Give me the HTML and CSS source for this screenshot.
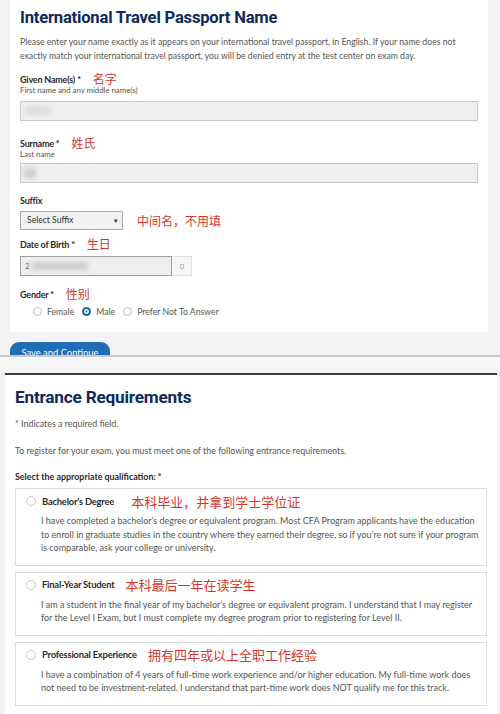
FILE: index.html
```html
<!DOCTYPE html>
<html lang="en">

<head>
    <meta charset="UTF-8">
    <meta name="viewport" content="width=device-width, initial-scale=1.0">
    <title>Registration</title>
    <link rel="stylesheet" href="styles.css">
</head>

<body>
    <div class="top">
        <div class="card">
            <h1 class="title">International Travel Passport Name</h1>
            <p class="intro">Please enter your name exactly as it appears on your international travel passport, in English. If your name does not exactly match your international travel passport, you will be denied entry at the test center on exam day.</p>

            <div class="label label_first">Given Name(s) *<span class="note note_given">名字</span></div>
            <div class="hint">First name and any middle name(s)</div>
            <div class="input input_given"><span class="blur blur_given"></span></div>

            <div class="label label_sur">Surname *<span class="note">姓氏</span></div>
            <div class="hint">Last name</div>
            <div class="input input_sur"><span class="blur blur_sur"></span></div>

            <div class="label label_suffix">Suffix</div>
            <div class="suffix_row">
                <div class="select">Select Suffix<span class="arrow">▾</span></div>
                <span class="note note_suffix">中间名，不用填</span>
            </div>

            <div class="label label_dob">Date of Birth *<span class="note">生日</span></div>
            <div class="date">
                <div class="date_input">2<span class="blur blur_date"></span></div>
                <div class="date_btn"><span class="cal"></span></div>
            </div>

            <div class="label label_gender">Gender *<span class="note">性别</span></div>
            <div class="radios">
                <span class="radio"></span><span class="radio_text">Female</span>
                <span class="radio radio_on"></span><span class="radio_text">Male</span>
                <span class="radio"></span><span class="radio_text">Prefer Not To Answer</span>
            </div>
        </div>
        <div class="actions">
            <div class="btn_clip"><button class="btn">Save and Continue</button></div>
        </div>
    </div>
    <div class="divider"></div>

    <div class="req_wrap">
        <div class="req_card">
            <h1 class="req_title">Entrance Requirements</h1>
            <p class="small req_note">* Indicates a required field.</p>
            <p class="small req_text">To register for your exam, you must meet one of the following entrance requirements.</p>
            <p class="small req_select">Select the appropriate qualification: *</p>

            <div class="option">
                <div class="option_head">
                    <span class="radio option_radio"></span>
                    <span class="option_name">Bachelor’s Degree</span>
                    <span class="option_note option_note_wide">本科毕业，并拿到学士学位证</span>
                </div>
                <p class="option_desc">I have completed a bachelor’s degree or equivalent program. Most CFA Program applicants have the education<br>to enroll in graduate studies in the country where they earned their degree, so if you’re not sure if your program<br>is comparable, ask your college or university.</p>
            </div>

            <div class="option">
                <div class="option_head">
                    <span class="radio option_radio"></span>
                    <span class="option_name">Final-Year Student</span>
                    <span class="option_note">本科最后一年在读学生</span>
                </div>
                <p class="option_desc">I am a student in the final year of my bachelor’s degree or equivalent program. I understand that I may register<br>for the Level I Exam, but I must complete my degree program prior to registering for Level II.</p>
            </div>

            <div class="option">
                <div class="option_head">
                    <span class="radio option_radio"></span>
                    <span class="option_name">Professional Experience</span>
                    <span class="option_note">拥有四年或以上全职工作经验</span>
                </div>
                <p class="option_desc">I have a combination of 4 years of full-time work experience and/or higher education. My full-time work does<br>not need to be investment-related. I understand that part-time work does NOT qualify me for this track.</p>
            </div>
        </div>
    </div>
</body>

</html>
```

FILE: styles.css
```css
* {
    margin: 0;
    padding: 0;
    box-sizing: border-box;
}

body {
    width: 500px;
    height: 714px;
    overflow: hidden;
    background-color: #f3f3f5;
    font-family: Lato, "Liberation Sans", "Noto Sans CJK SC", sans-serif;
    color: #555;
}

/* 上半部分：护照姓名 */
.top {
    padding: 0 12px 0 10px;
}

.card {
    height: 332px;
    padding: 8px 10px 0 10px;
    background-color: #fff;
}

.title {
    font-family: Roboto, "Liberation Sans", sans-serif;
    font-size: 16.6px;
    line-height: 20px;
    font-weight: 700;
    color: #0e2a5a;
    letter-spacing: -0.2px;
}

.intro {
    margin-top: 7px;
    width: 452px;
    font-size: 8.7px;
    line-height: 14px;
    color: #555;
}

.label {
    height: 12px;
    font-size: 9px;
    line-height: 12px;
    font-weight: 700;
    color: #2b2b2b;
    letter-spacing: -0.2px;
}

.label_first {
    margin-top: 10px;
}

.label_sur {
    margin-top: 16px;
}

.label_suffix {
    margin-top: 12px;
}

.label_dob {
    margin-top: 8px;
}

.label_gender {
    margin-top: 12px;
}

.note {
    margin-left: 12px;
    font-family: "Noto Sans CJK SC", sans-serif;
    font-size: 12px;
    line-height: 12px;
    font-weight: 400;
    letter-spacing: 0;
    color: #d5362c;
    vertical-align: -1px;
}

.note_given {
    margin-left: 12px;
}

.hint {
    height: 10px;
    font-size: 7.8px;
    line-height: 10px;
    color: #555;
}

.input {
    position: relative;
    width: 458px;
    height: 20px;
    margin-top: 6px;
    background-color: #efefef;
    border: 1px solid #c8c8c8;
    overflow: hidden;
}

.input_sur {
    margin-top: 4px;
}

.blur {
    position: absolute;
    top: 4px;
    background-color: #d6d6d6;
    filter: blur(2px);
}

.blur_given {
    left: 4px;
    width: 26px;
    height: 9px;
    background-color: #dedede;
}

.blur_sur {
    left: 3px;
    width: 12px;
    height: 10px;
    background-color: #cfcfcf;
}

.suffix_row {
    display: flex;
    align-items: center;
    margin-top: 4px;
}

.select {
    position: relative;
    width: 103px;
    height: 19px;
    padding-left: 6px;
    font-size: 8.6px;
    line-height: 17px;
    color: #333;
    background-color: #f1f1f1;
    border: 1px solid #a9a9a9;
}

.arrow {
    position: absolute;
    right: 4px;
    top: 0;
    font-size: 7px;
    color: #333;
}

.note_suffix {
    margin-left: 14px;
    vertical-align: 0;
}

.date {
    display: flex;
    margin-top: 6px;
}

.date_input {
    position: relative;
    width: 152px;
    height: 20px;
    padding-left: 4px;
    font-size: 8px;
    line-height: 18px;
    color: #777;
    background-color: #eee;
    border: 1px solid #9f9f9f;
}

.blur_date {
    left: 11px;
    top: 5px;
    width: 56px;
    height: 8px;
    background-color: #cdcdcd;
}

.date_btn {
    display: flex;
    align-items: center;
    justify-content: center;
    width: 20px;
    height: 20px;
    background-color: #f5f5f5;
    border: 1px solid #e0e0e0;
    border-left: none;
}

.cal {
    width: 4px;
    height: 5px;
    border: 1px solid #b5b5b5;
    border-radius: 1px;
}

.radios {
    display: flex;
    align-items: center;
    height: 12px;
    margin-top: 5px;
    padding-left: 13px;
}

.radio {
    display: block;
    flex-shrink: 0;
    width: 9px;
    height: 9px;
    border: 1px solid #bdbdbd;
    border-radius: 50%;
    background-color: #fff;
}

.radio_on {
    border: 2px solid #1d6ba0;
    background-color: #1d6ba0;
    box-shadow: inset 0 0 0 1.5px #fff;
}

.radio_text {
    margin: 0 8px 0 5px;
    font-size: 8.7px;
    color: #555;
}

.actions {
    padding-top: 10px;
}

.btn_clip {
    width: 100px;
    height: 13px;
    overflow: hidden;
}

.btn {
    display: block;
    width: 100px;
    height: 22px;
    border: none;
    border-radius: 9px;
    background-color: #1f6db5;
    color: #fff;
    font-family: Lato, "Liberation Sans", sans-serif;
    font-size: 9.4px;
    line-height: 20px;
}

.divider {
    height: 18px;
    border-top: 2px solid #c9c9cd;
    background-color: #f6f6f6;
}

/* 下半部分：报考条件 */
.req_wrap {
    padding: 0 3px 0 5px;
}

.req_card {
    height: 342px;
    padding: 11px 10px 0 10px;
    background-color: #fff;
    border-top: 2px solid #3c3c3c;
}

.req_title {
    font-family: Roboto, "Liberation Sans", sans-serif;
    font-size: 17.2px;
    line-height: 22px;
    font-weight: 700;
    color: #0e2a5a;
    letter-spacing: -0.2px;
}

.small {
    font-size: 8.9px;
    line-height: 12px;
    color: #555;
}

.req_note {
    margin-top: 10px;
}

.req_text {
    margin-top: 15px;
}

.req_select {
    margin-top: 14px;
    font-weight: 700;
    color: #2b2b2b;
}

.option {
    margin-top: 6px;
    padding: 5px 2px 10px 10px;
    border: 1px solid #dcdcdc;
}

.option:first-of-type {
    margin-top: 5px;
}

.option_head {
    display: flex;
    align-items: center;
    height: 14px;
}

.option_radio {
    width: 10px;
    height: 10px;
    border-color: #c9c9c9;
}

.option_name {
    margin-left: 6px;
    font-size: 9.4px;
    font-weight: 700;
    color: #2b2b2b;
    letter-spacing: -0.2px;
}

.option_note {
    margin-left: 11px;
    font-family: "Noto Sans CJK SC", sans-serif;
    font-size: 13px;
    color: #d5362c;
}

.option_note_wide {
    margin-left: 17px;
}

.option_desc {
    margin: 6px 0 0 15px;
    font-size: 9px;
    line-height: 13.5px;
    color: #555;
    white-space: nowrap;
}
```
